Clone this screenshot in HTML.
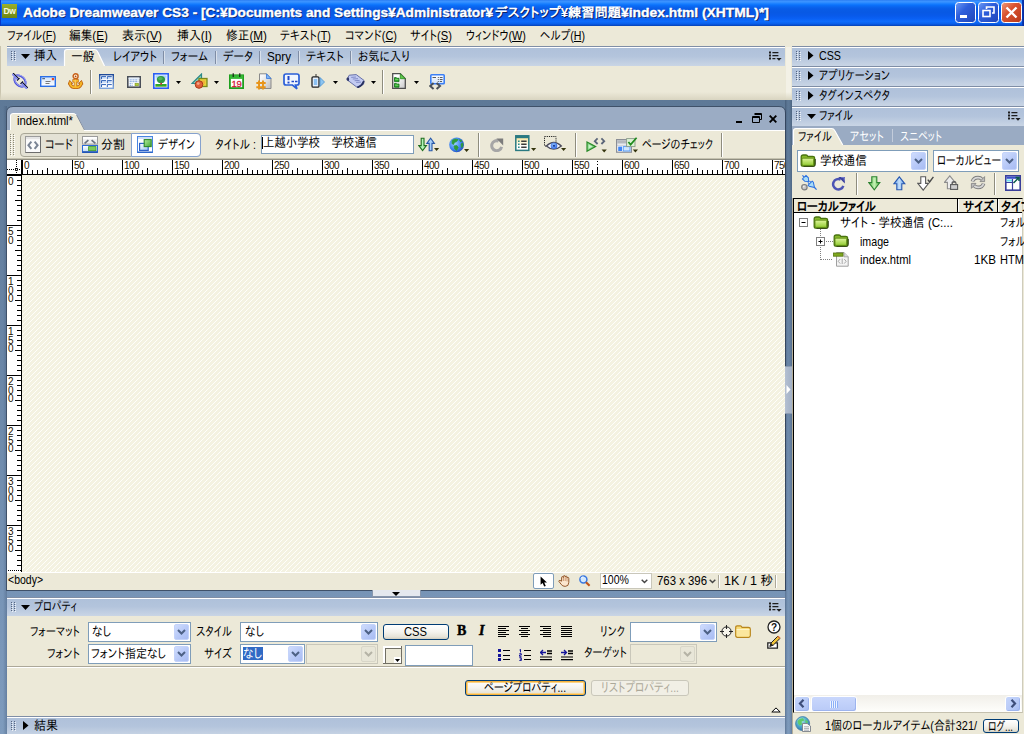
<!DOCTYPE html>
<html lang="ja"><head><meta charset="utf-8"><title>Adobe Dreamweaver CS3</title>
<style>
html,body{margin:0;padding:0}
body{width:1024px;height:734px;overflow:hidden;background:#ECE9D8;font-family:'Liberation Sans','IPAPGothic','IPAGothic',sans-serif;font-size:12px;position:relative}
#root{position:absolute;left:0;top:0;width:1024px;height:734px;overflow:hidden;background:#ECE9D8}
#root div,#root span.t,#root svg{position:absolute;box-sizing:border-box}
span.t{white-space:nowrap;transform-origin:0 0}
u{text-decoration:underline;text-underline-offset:1px}
.hd{background:linear-gradient(#AFC1DA,#B3C4DC 45%,#C9D5E5);border-top:1px solid #fff;box-shadow:0 -1px 0 #7F8EA6}
.sel{background:#fff;border:1px solid #7F9DB9}
.ddb{border:1px solid #C4D3FA;border-radius:2px;background:linear-gradient(135deg,#CFDCFD,#B5C7F7 60%,#A9BCF2)}
.btn{border:1px solid #003C74;border-radius:3px;background:linear-gradient(#fff,#F4F3EE 50%,#E6E3D8 85%,#D2CEC0)}
</style></head>
<body><div id="root">
<div style="left:0px;top:0px;width:1024px;height:26px;background:linear-gradient(#2A7CF2 0%,#3C93FF 5%,#2E8CFF 10%,#177EFF 15%,#0A70FA 20%,#0A64EE 27%,#085BE6 35%,#0859E4 48%,#085AEA 60%,#0A60F4 72%,#0E6CFC 82%,#0A62EE 90%,#0852D8 95%,#0642B0 100%)"></div>
<div style="left:0px;top:0px;width:1px;height:26px;background:#0838C8"></div>
<div style="left:1022px;top:0px;width:2px;height:26px;background:linear-gradient(90deg,#0A3CC0,#062A98)"></div>
<svg style="left:2px;top:4px" width="15" height="14" viewBox="0 0 15 14"><defs><linearGradient id="gdw1" x1="0" y1="0" x2="0" y2="1"><stop offset="0" stop-color="#9CB02A"/><stop offset="1" stop-color="#6C8612"/></linearGradient></defs><rect width="15" height="14" fill="url(#gdw1)"/><text x="7.5" y="10.2" font-size="8.5" font-weight="bold" fill="#F6F8E4" text-anchor="middle" font-family="Liberation Sans,sans-serif" letter-spacing="-0.3">Dw</text></svg>
<span class="t" style="left:23px;top:6px;font-size:13px;line-height:13px;color:#fff;font-weight:bold;transform:scaleX(1.053);text-shadow:1px 1px 0 #0A246A;-webkit-text-stroke:0.35px #fff;">Adobe Dreamweaver CS3 - [C:¥Documents and Settings¥Administrator¥</span>
<span class="t" style="left:495px;top:6px;font-size:13px;line-height:13px;color:#fff;font-weight:bold;transform:scaleX(1.016);text-shadow:1px 1px 0 #0A246A;">デスクトップ¥練習問題</span>
<span class="t" style="left:621px;top:6px;font-size:13px;line-height:13px;color:#fff;font-weight:bold;transform:scaleX(1.067);text-shadow:1px 1px 0 #0A246A;-webkit-text-stroke:0.35px #fff;">¥index.html (XHTML)*]</span>
<svg style="left:955px;top:2px" width="67" height="21" viewBox="0 0 67 21"><defs><linearGradient id="gr2" x1="0" y1="0" x2="1" y2="1"><stop offset="0" stop-color="#EE9A7B"/><stop offset="0.4" stop-color="#D9532F"/><stop offset="1" stop-color="#B8391A"/></linearGradient><linearGradient id="gb2" x1="0" y1="0" x2="1" y2="1"><stop offset="0" stop-color="#6E9BF5"/><stop offset="0.4" stop-color="#2E5FDC"/><stop offset="1" stop-color="#1F45B8"/></linearGradient></defs><rect x="0.5" y="0.5" width="20" height="20" rx="3" fill="url(#gb2)" stroke="#fff"/><rect x="23.5" y="0.5" width="20" height="20" rx="3" fill="url(#gb2)" stroke="#fff"/><rect x="46.5" y="0.5" width="20" height="20" rx="3" fill="url(#gr2)" stroke="#fff"/><rect x="5" y="13" width="7" height="3" fill="#fff"/><path d="M31.5 7V5H39V11H37" fill="none" stroke="#fff" stroke-width="1.6"/><rect x="28" y="8.5" width="7" height="6" fill="none" stroke="#fff" stroke-width="1.6"/><path d="M51.5 5.5L61.5 15.5M61.5 5.5L51.5 15.5" stroke="#fff" stroke-width="2.4"/></svg>
<span class="t" style="left:7px;top:29px;font-size:13px;line-height:13px;color:#000;transform:scaleX(0.829);">ファイル(<u>F</u>)</span>
<span class="t" style="left:69px;top:29px;font-size:13px;line-height:13px;color:#000;transform:scaleX(0.899);">編集(<u>E</u>)</span>
<span class="t" style="left:122px;top:29px;font-size:13px;line-height:13px;color:#000;transform:scaleX(0.923);">表示(<u>V</u>)</span>
<span class="t" style="left:177px;top:29px;font-size:13px;line-height:13px;color:#000;transform:scaleX(0.914);">挿入(<u>I</u>)</span>
<span class="t" style="left:226px;top:29px;font-size:13px;line-height:13px;color:#000;transform:scaleX(0.900);">修正(<u>M</u>)</span>
<span class="t" style="left:280px;top:29px;font-size:13px;line-height:13px;color:#000;transform:scaleX(0.836);">テキスト(<u>T</u>)</span>
<span class="t" style="left:345px;top:29px;font-size:13px;line-height:13px;color:#000;transform:scaleX(0.842);">コマンド(<u>C</u>)</span>
<span class="t" style="left:410px;top:29px;font-size:13px;line-height:13px;color:#000;transform:scaleX(0.858);">サイト(<u>S</u>)</span>
<span class="t" style="left:466px;top:29px;font-size:13px;line-height:13px;color:#000;transform:scaleX(0.837);">ウィンドウ(<u>W</u>)</span>
<span class="t" style="left:540px;top:29px;font-size:13px;line-height:13px;color:#000;transform:scaleX(0.814);">ヘルプ(<u>H</u>)</span>
<div style="left:0px;top:46px;width:1px;height:54px;background:#C9C4AE"></div>
<div class="hd" style="left:7px;top:47px;width:778px;height:19px;"></div>
<div style="left:11px;top:51px;width:5px;height:10px;background:repeating-linear-gradient(#56657F 0 1px,transparent 1px 2px) 0 0/1px 100% no-repeat,repeating-linear-gradient(#56657F 0 1px,transparent 1px 2px) 3px 0/1px 100% no-repeat,repeating-linear-gradient(rgba(255,255,255,.75) 0 1px,transparent 1px 2px) 1px 1px/1px 100% no-repeat,repeating-linear-gradient(rgba(255,255,255,.75) 0 1px,transparent 1px 2px) 4px 1px/1px 100% no-repeat"></div>
<svg style="left:21px;top:54px" width="9" height="5" viewBox="0 0 9 5"><path d="M0 0H9L4.5 5z" fill="#000"/></svg>
<span class="t" style="left:34px;top:49px;font-size:13px;line-height:13px;color:#000;transform:scaleX(0.885);">挿入</span>
<svg style="left:62px;top:48px" width="46" height="18" viewBox="0 0 46 18"><path d="M2 18V4Q2 1.5 5 1.5H32.5Q35 1.5 36 4L42.5 18z" fill="#ECE9D8"/><path d="M2.5 18V4Q2.5 1.5 5 1.5H32.5Q34.8 1.5 35.8 4L42.5 18" fill="none" stroke="#fff" stroke-width="1.2"/></svg>
<span class="t" style="left:71px;top:50px;font-size:13px;line-height:13px;color:#000;transform:scaleX(0.904);">一般</span>
<span class="t" style="left:113px;top:50px;font-size:13px;line-height:13px;color:#000;transform:scaleX(0.853);">レイアウト</span>
<span class="t" style="left:171px;top:50px;font-size:13px;line-height:13px;color:#000;transform:scaleX(0.847);">フォーム</span>
<span class="t" style="left:223px;top:50px;font-size:13px;line-height:13px;color:#000;transform:scaleX(0.851);">データ</span>
<span class="t" style="left:267px;top:50px;font-size:13px;line-height:13px;color:#000;transform:scaleX(0.898);">Spry</span>
<span class="t" style="left:306px;top:50px;font-size:13px;line-height:13px;color:#000;transform:scaleX(0.857);">テキスト</span>
<span class="t" style="left:358px;top:50px;font-size:13px;line-height:13px;color:#000;transform:scaleX(0.869);">お気に入り</span>
<div style="left:163px;top:51px;width:1px;height:13px;background:#7F8DA5"></div>
<div style="left:164px;top:51px;width:1px;height:13px;background:#D9E1EC"></div>
<div style="left:215px;top:51px;width:1px;height:13px;background:#7F8DA5"></div>
<div style="left:216px;top:51px;width:1px;height:13px;background:#D9E1EC"></div>
<div style="left:259px;top:51px;width:1px;height:13px;background:#7F8DA5"></div>
<div style="left:260px;top:51px;width:1px;height:13px;background:#D9E1EC"></div>
<div style="left:298px;top:51px;width:1px;height:13px;background:#7F8DA5"></div>
<div style="left:299px;top:51px;width:1px;height:13px;background:#D9E1EC"></div>
<div style="left:350px;top:51px;width:1px;height:13px;background:#7F8DA5"></div>
<div style="left:351px;top:51px;width:1px;height:13px;background:#D9E1EC"></div>
<svg style="left:769px;top:51px" width="13" height="10" viewBox="0 0 13 10"><path d="M0 0.5h2v2h-2zM0 3.5h2v2h-2zM0 6.5h2v2h-2z" fill="#1E1E1E"/><path d="M3.4 1.7H9.4M3.4 4.7H9.4M3.4 7.7H6.4" stroke="#1E1E1E" stroke-width="1.3" fill="none"/><path d="M7.4 7H12.6L10 9.8z" fill="#1E1E1E"/></svg>
<div style="left:786px;top:47px;width:5px;height:52px;background:#F3F1E6"></div>
<div style="left:0px;top:92px;width:792px;height:8px;background:linear-gradient(rgba(236,233,216,0),#D9D5C1)"></div>
<svg style="left:12px;top:73px" width="16" height="16" viewBox="0 0 16 16"><g transform="rotate(45 8 8)"><ellipse cx="8" cy="8" rx="6.6" ry="4.6" fill="none" stroke="#4A50D8" stroke-width="2"/><ellipse cx="8" cy="7.6" rx="6.6" ry="4.6" fill="none" stroke="#B8BCFA" stroke-width="0.7"/><path d="M-2.5 7.3H5.6M10.4 7.3H18.5" stroke="#101230" stroke-width="1.2"/><path d="M-2.5 8.7H5.6M10.4 8.7H18.5" stroke="#7F86F0" stroke-width="1.6"/><path d="M5.6 6.2V9.8M10.4 6.2V9.8" stroke="#101230" stroke-width="1"/></g></svg>
<svg style="left:40px;top:76px" width="16" height="11" viewBox="0 0 16 11"><defs><linearGradient id="gem3" x1="0" y1="0" x2="0" y2="1"><stop offset="0" stop-color="#CFE3FB"/><stop offset="1" stop-color="#FFFFFF"/></linearGradient></defs><rect x="0.7" y="0.7" width="14.6" height="9.6" fill="url(#gem3)" stroke="#2A6FE8" stroke-width="1.4"/><path d="M2.3 2.7H5" stroke="#2A3A5A" stroke-width="0.9"/><rect x="11.8" y="2" width="2.2" height="2.2" fill="#E8431F"/><path d="M5.5 5.5H10.5M5.5 7.5H9.5" stroke="#6A6A6A" stroke-width="0.9"/></svg>
<svg style="left:68px;top:73px" width="16" height="16" viewBox="0 0 16 16"><g fill="none" stroke-linecap="butt"><path d="M7.6 5.8V14.8M4.4 7.9H10.8M1.9 9.6Q2.2 14.4 7.6 14.4Q13 14.4 13.3 9.6" stroke="#BE6410" stroke-width="3.4"/><path d="M0.3 11.2L1.7 7.4L4.6 10.6zM14.9 11.2L13.5 7.4L10.6 10.6z" fill="#F5B324" stroke="#BE6410" stroke-width="0.9"/><path d="M7.6 5.8V14.6M4.8 7.9H10.4M1.9 9.8Q2.2 14.4 7.6 14.4Q13 14.4 13.3 9.8" stroke="#F7B828" stroke-width="1.9"/><path d="M7.1 6.4V13.6" stroke="#FFE394" stroke-width="0.7"/></g><circle cx="7.6" cy="3.3" r="2.5" fill="#FFF3DC" stroke="#C8601A" stroke-width="1.4"/><circle cx="7.6" cy="3.3" r="0.9" fill="#B24A12"/></svg>
<div style="left:90px;top:70px;width:1px;height:24px;background:#8E8C7E"></div>
<div style="left:91px;top:70px;width:1px;height:24px;background:#fff"></div>
<svg style="left:99px;top:74px" width="15" height="15" viewBox="0 0 15 15"><defs><linearGradient id="gtb4" x1="0" y1="0" x2="0" y2="1"><stop offset="0" stop-color="#1F4A98"/><stop offset="1" stop-color="#7FA5DC"/></linearGradient></defs><rect x="0.7" y="0.7" width="13.6" height="13.6" fill="#fff" stroke="url(#gtb4)" stroke-width="1.4"/><g fill="#CFE0F8"><rect x="2.5" y="2.6" width="4.4" height="2.6"/><rect x="8.3" y="2.6" width="4.4" height="2.6"/><rect x="2.5" y="6.6" width="4.4" height="2.6"/><rect x="8.3" y="6.6" width="4.4" height="2.6"/></g><g stroke="#2F62B8" stroke-width="1" fill="none"><path d="M2.5 5.2V2.6H7M8.3 5.2V2.6H12.8M2.5 9.2V6.6H7M8.3 9.2V6.6H12.8M2.5 13V10.6H7M8.3 13V10.6H12.8"/></g></svg>
<svg style="left:127px;top:76px" width="14" height="12" viewBox="0 0 14 12"><rect x="0.8" y="0.8" width="12.4" height="10.4" fill="#fff" stroke="#4A4F58" stroke-width="1.6"/><rect x="1.6" y="1.6" width="10.8" height="1.4" fill="#E4EEFA"/><path d="M2.6 3.9H11.4M2.6 5.7H11.4" stroke="#5A8AD0" stroke-width="0.8" stroke-dasharray="2.2 0.6"/><path d="M2.6 7.7H5.6M2.6 9.4H5.6" stroke="#5A8AD0" stroke-width="0.8" stroke-dasharray="1.4 0.6"/><rect x="8" y="7.2" width="3.6" height="2.6" fill="#B4CC3A" stroke="#6E8A1E" stroke-width="0.5"/></svg>
<svg style="left:153px;top:73px" width="16" height="16" viewBox="0 0 16 16"><defs><linearGradient id="gim5" x1="0" y1="0" x2="0" y2="1"><stop offset="0" stop-color="#9CCBF8"/><stop offset="0.8" stop-color="#FFFFFF"/></linearGradient></defs><rect x="0.8" y="0.8" width="14.4" height="14.4" fill="#fff" stroke="#2A5FF5" stroke-width="1.6"/><rect x="2.4" y="2.4" width="11.2" height="9" fill="url(#gim5)"/><rect x="2.4" y="11" width="11.2" height="2.7" fill="#2FA82A"/><path d="M2.4 13.4H13.6" stroke="#B8C83A" stroke-width="0.6" stroke-dasharray="1 1"/><ellipse cx="8" cy="6.6" rx="4.1" ry="3.7" fill="#2F9A45"/><ellipse cx="7.4" cy="5.6" rx="2.2" ry="1.7" fill="#52B85A"/><rect x="7.3" y="9.8" width="1.7" height="2" fill="#C03A3A"/></svg>
<svg style="left:176px;top:81px" width="5" height="3" viewBox="0 0 5 3"><path d="M0 0H5L2.5 3z" fill="#000"/></svg>
<svg style="left:191px;top:73px" width="17" height="17" viewBox="0 0 17 17"><path d="M1 10.5L10.5 1V10.5z" fill="#8FD3C0" stroke="#2B8A8A" stroke-width="1.2"/><rect x="8" y="5.5" width="8" height="8" fill="#E6D23C" stroke="#7A8A1E" stroke-width="1.3"/><rect x="10.5" y="7.5" width="3.5" height="3.5" fill="#F3B13A"/><circle cx="8" cy="11.5" r="3.8" fill="#E0603A" stroke="#A83A1A" stroke-width="1"/><circle cx="7.2" cy="10.6" r="1.4" fill="#F5A58A"/></svg>
<svg style="left:214px;top:81px" width="5" height="3" viewBox="0 0 5 3"><path d="M0 0H5L2.5 3z" fill="#000"/></svg>
<svg style="left:229px;top:73px" width="15" height="16" viewBox="0 0 15 16"><rect x="0.9" y="2.3" width="13.2" height="12.8" fill="#fff" stroke="#1FA01F" stroke-width="1.8"/><rect x="1" y="2.3" width="13" height="3.6" fill="#35B835"/><path d="M4.2 0.3V4M10.8 0.3V4" stroke="#111" stroke-width="1.1"/><text x="7.6" y="13.6" font-size="9.5" fill="#D41A3A" text-anchor="middle" font-family="Liberation Sans,sans-serif" letter-spacing="-0.3" stroke="#D41A3A" stroke-width="0.3">19</text></svg>
<svg style="left:256px;top:73px" width="16" height="17" viewBox="0 0 16 17"><defs><linearGradient id="gss6" x1="0" y1="0" x2="1" y2="1"><stop offset="0.2" stop-color="#F8F8F8"/><stop offset="1" stop-color="#BEBEBE"/></linearGradient></defs><path d="M3.5 0.8H10.5L15 5.5V15.5H3.5z" fill="url(#gss6)" stroke="#8A8A8A" stroke-width="1"/><path d="M10.5 0.8V5.5H15z" fill="#7FB5F8" stroke="#3A78D8" stroke-width="0.8"/><path d="M3 7.6V16.6M7 7.6V16.6M0.3 10H9.7M0.3 14.2H9.7" stroke="#E8951A" stroke-width="1.9" fill="none"/></svg>
<svg style="left:283px;top:73px" width="17" height="17" viewBox="0 0 17 17"><path d="M3 1H14Q16 1 16 3V10Q16 12 14 12H12.5L14 15.8L9.5 12H3Q1 12 1 10V3Q1 1 3 1z" fill="#F1F6FE" stroke="#2A5FD8" stroke-width="1.7"/><path d="M5.5 3V7.2" stroke="#1F47C8" stroke-width="2"/><rect x="4.5" y="8.6" width="2" height="1.9" fill="#1F47C8"/><path d="M8.5 8.5H11M12 8.5H14.5" stroke="#1F47C8" stroke-width="1.4"/></svg>
<svg style="left:311px;top:74px" width="14" height="14" viewBox="0 0 14 14"><path d="M5 0V3" stroke="#333" stroke-width="1"/><rect x="1" y="2.8" width="7" height="10.4" rx="1.2" fill="#E8F0FB" stroke="#222" stroke-width="1.3"/><rect x="2.8" y="5" width="3.4" height="6" fill="#8CC1F2"/><path d="M9 3.5L13.5 8L9 12.5z" fill="#8EC5F0" stroke="#4A90D0" stroke-width="0.8"/></svg>
<svg style="left:333px;top:81px" width="5" height="3" viewBox="0 0 5 3"><path d="M0 0H5L2.5 3z" fill="#000"/></svg>
<svg style="left:346px;top:74px" width="19" height="14" viewBox="0 0 19 14"><path d="M3.2 1.2L10.2 0.6L18 6.4L17.6 10.2L11.2 13.4L0.8 5.6z" fill="#C3CBF2" stroke="#5A64A0" stroke-width="0.9"/><path d="M0.6 4.2Q0.2 6.6 2.6 7.2Q3.6 5.6 2.8 3.6Q1.2 3 0.6 4.2z" fill="#2F3768"/><path d="M11.2 13.4Q15.5 12.6 17.9 7.2" fill="none" stroke="#27305F" stroke-width="1.9"/><path d="M5.2 3.4L10 3M6.8 5L12 4.7M8.6 6.7L13.6 6.4M10.2 8.4L15 8.1" stroke="#7A84C2" stroke-width="0.9"/></svg>
<svg style="left:371px;top:81px" width="5" height="3" viewBox="0 0 5 3"><path d="M0 0H5L2.5 3z" fill="#000"/></svg>
<div style="left:382px;top:70px;width:1px;height:24px;background:#8E8C7E"></div>
<div style="left:383px;top:70px;width:1px;height:24px;background:#fff"></div>
<svg style="left:392px;top:73px" width="14" height="16" viewBox="0 0 14 16"><defs><linearGradient id="gtp7" x1="0" y1="0" x2="1" y2="1"><stop offset="0.3" stop-color="#FFFFFF"/><stop offset="1" stop-color="#C8C8C8"/></linearGradient></defs><path d="M0.7 0.7H8.3L13.3 5.7V15.3H0.7z" fill="url(#gtp7)" stroke="#4F4F4F" stroke-width="1.3"/><path d="M8.3 0.7V5.7H13.3z" fill="#5FCB4A" stroke="#2A8A1E" stroke-width="0.8"/><g fill="#2DAA2D" stroke="#0F6A14" stroke-width="0.8"><path d="M2.5 4.6H4.3L4.9 5.3H7V8.6H2.5z"/><path d="M2.5 10.4H4.3L4.9 11.1H7V14.2H2.5z"/></g><path d="M3.2 6.4H6.4M3.2 12.2H6.4" stroke="#8FE07A" stroke-width="0.8"/></svg>
<svg style="left:414px;top:81px" width="5" height="3" viewBox="0 0 5 3"><path d="M0 0H5L2.5 3z" fill="#000"/></svg>
<svg style="left:429px;top:74px" width="16" height="16" viewBox="0 0 16 16"><defs><linearGradient id="gtc8" x1="0" y1="0" x2="0" y2="1"><stop offset="0" stop-color="#FFFFFF"/><stop offset="1" stop-color="#CFE2FB"/></linearGradient></defs><rect x="1.8" y="0.8" width="13.4" height="9" rx="0.8" fill="url(#gtc8)" stroke="#3A7FF5" stroke-width="1.6"/><path d="M3.5 3.5H7M8.8 3.5H9.8M10.8 3.5H13.6M8.8 5.5H9.8M10.8 5.5H13.6M8.8 7.5H9.8M10.8 7.5H13" stroke="#4A4A4A" stroke-width="0.9"/><path d="M4.6 9L1.2 12L4.6 15M7.6 9L11 12L7.6 15" fill="none" stroke="#4A5058" stroke-width="2"/></svg>
<div style="left:0px;top:100px;width:792px;height:634px;background:linear-gradient(#5E7997,#6A86A7 40%,#7895B7 80%,#7E9BBD)"></div>
<div style="left:3px;top:106px;width:4px;height:628px;background:linear-gradient(90deg,rgba(40,60,90,0),rgba(40,60,90,0.28))"></div>
<svg style="left:6px;top:106px" width="780" height="30" viewBox="0 0 780 30"><path d="M0.5 30V7Q0.5 0.5 7 0.5H773Q779.5 0.5 779.5 7V30" fill="#9BACC4" stroke="#3F5169" stroke-width="1"/></svg>
<div style="left:6px;top:130px;width:780px;height:461px;background:#ECE9D8;border-left:1px solid #3F5169;border-right:1px solid #3F5169;border-bottom:1px solid #3F5169"></div>
<svg style="left:9px;top:112px" width="80" height="18" viewBox="0 0 80 18"><path d="M1 18V4Q1 1.5 4 1.5H64Q67 1.5 68 3.5L76 18z" fill="#ECE9D8"/><path d="M1.5 18V4Q1.5 1.5 4 1.5H64Q66.6 1.5 67.6 3.5" fill="none" stroke="#fff"/><path d="M67.6 3L75.5 18" stroke="#7F8CA3" fill="none"/></svg>
<span class="t" style="left:17px;top:114px;font-size:13px;line-height:13px;color:#000;transform:scaleX(0.871);">index.html*</span>
<div style="left:84px;top:130px;width:701px;height:1px;background:#fff"></div>
<div style="left:736px;top:121px;width:6px;height:2px;background:#000"></div>
<svg style="left:752px;top:113px" width="10" height="10" viewBox="0 0 10 10"><path d="M2.5 0.5H9.5V6.5H8M2.5 1.5H9.5" stroke="#000" fill="none"/><path d="M0.5 3.5H7.5V9.5H0.5zM0.5 4.5H7.5" stroke="#000" fill="none"/></svg>
<svg style="left:769px;top:115px" width="8" height="8" viewBox="0 0 8 8"><path d="M0.7 0.7L7.3 7.3M7.3 0.7L0.7 7.3" stroke="#000" stroke-width="1.9"/></svg>
<div style="left:7px;top:158px;width:778px;height:1px;background:#C5C2B0"></div>
<div style="left:7px;top:159px;width:778px;height:1px;background:#8F8D80"></div>
<div style="left:10px;top:134px;width:5px;height:22px;background:repeating-linear-gradient(#8A887A 0 1px,transparent 1px 2px) 0 0/1px 100% no-repeat,repeating-linear-gradient(#8A887A 0 1px,transparent 1px 2px) 3px 0/1px 100% no-repeat,repeating-linear-gradient(#fff 0 1px,transparent 1px 2px) 1px 1px/1px 100% no-repeat,repeating-linear-gradient(#fff 0 1px,transparent 1px 2px) 4px 1px/1px 100% no-repeat"></div>
<div style="left:20px;top:133px;width:181px;height:24px;background:#E4E2D5;border:1px solid #A8A696;border-radius:4px"></div>
<div style="left:131px;top:133px;width:70px;height:24px;background:#fff;border:1px solid #86A2CE;border-radius:0 4px 4px 0"></div>
<div style="left:77px;top:134px;width:1px;height:22px;background:#A8A696"></div>
<svg style="left:25px;top:136px" width="16" height="17" viewBox="0 0 16 17"><rect x="0.5" y="0.5" width="15" height="16" fill="#FBFBFB" stroke="#9C9C9C"/><rect x="1" y="1" width="14" height="2.2" fill="#E4E4E4"/><path d="M0.5 16.5H15.5V0.5" fill="none" stroke="#6C6C6C"/><path d="M6.4 5.6L3.4 9.2L6.4 12.8M9.6 5.6L12.6 9.2L9.6 12.8" fill="none" stroke="#7A8494" stroke-width="2"/></svg>
<span class="t" style="left:45px;top:138px;font-size:13px;line-height:13px;color:#000;transform:scaleX(0.848);">コード</span>
<svg style="left:82px;top:136px" width="16" height="17" viewBox="0 0 16 17"><defs><linearGradient id="gsp9" x1="0" y1="0" x2="0" y2="1"><stop offset="0" stop-color="#FFFFFF"/><stop offset="1" stop-color="#B8D8FA"/></linearGradient></defs><rect x="0.5" y="0.5" width="15" height="7.6" fill="#F0F0F0" stroke="#9C9C9C"/><rect x="1" y="1" width="14" height="1.8" fill="#fff"/><path d="M2.6 7.4L6.4 4.2M13.4 7.4L9.6 4.2" fill="none" stroke="#6A7280" stroke-width="1.7"/><rect x="0.5" y="9.5" width="15" height="7" fill="url(#gsp9)" stroke="#2D6BD8"/><path d="M0.5 16H15.5" stroke="#1F50B0" stroke-width="1.6"/><rect x="6.6" y="10.6" width="7.4" height="4" fill="#7DCB5A" stroke="#3F9A2A" stroke-width="0.8"/></svg>
<span class="t" style="left:101px;top:138px;font-size:13px;line-height:13px;color:#000;transform:scaleX(0.923);">分割</span>
<svg style="left:137px;top:136px" width="16" height="17" viewBox="0 0 16 17"><defs><linearGradient id="gds110" x1="0" y1="0" x2="1" y2="1"><stop offset="0" stop-color="#FFFFFF"/><stop offset="1" stop-color="#9CC6F8"/></linearGradient><linearGradient id="gds210" x1="0" y1="0" x2="1" y2="1"><stop offset="0" stop-color="#B4ECA0"/><stop offset="1" stop-color="#44A838"/></linearGradient></defs><rect x="0.5" y="0.5" width="15" height="16" fill="#fff" stroke="#4A86E0"/><rect x="1" y="1" width="14" height="2" fill="#CFE0F8"/><path d="M0.5 16.2H15.5" stroke="#2A62C8" stroke-width="1.4"/><rect x="2.6" y="7.4" width="8.6" height="7" fill="url(#gds110)" stroke="#2D62C8" stroke-width="1.2"/><rect x="7.2" y="3.6" width="7" height="7" fill="url(#gds210)" stroke="#2E8A2A" stroke-width="1.1"/></svg>
<span class="t" style="left:158px;top:138px;font-size:13px;line-height:13px;color:#000;transform:scaleX(0.804);">デザイン</span>
<span class="t" style="left:215px;top:138px;font-size:13px;line-height:13px;color:#000;transform:scaleX(0.822);">タイトル :</span>
<div style="left:261px;top:135px;width:153px;height:19px;background:#fff;border:1px solid #7F9DB9"></div>
<span class="t" style="left:263px;top:136px;font-size:13px;line-height:13px;color:#000;transform:scaleX(0.877);">上越小学校　学校通信</span>
<div style="left:262px;top:137px;width:1px;height:12px;background:#000"></div>
<svg style="left:418px;top:137px" width="22" height="15" viewBox="0 0 22 15"><path d="M3.2 1.2H6V8.6H8.4L4.6 13.6L0.8 8.6H3.2z" fill="#B2F2B8" stroke="#1E6E1E" stroke-width="1.1"/><path d="M11.2 13.8H14V6.4H16.4L12.6 1.2L8.8 6.4H11.2z" fill="#A8D0F8" stroke="#2858A8" stroke-width="1.1"/><path d="M16 11H21.2L18.6 14z" fill="#33330C"/></svg>
<svg style="left:449px;top:137px" width="21" height="16" viewBox="0 0 21 16"><defs><radialGradient id="gg11" cx="0.38" cy="0.4" r="0.75"><stop offset="0" stop-color="#9CD0FF"/><stop offset="0.55" stop-color="#3F84F0"/><stop offset="1" stop-color="#1A3CA8"/></radialGradient></defs><circle cx="7.6" cy="7.8" r="7.4" fill="url(#gg11)"/><path d="M3.2 3.4L6 2L9 2.6L7.6 4.6L5.4 5.4L4.6 7.4L3 6.6zM10.4 2.8L12.6 3.4L12 5zM5 9L7.8 8.6L9.2 10.4L7.6 13.4L5.8 12zM12 7L13.6 6L14 9L12.6 10.6z" fill="#2E9A3A" stroke="#2E9A3A" stroke-width="0.8" stroke-linejoin="round"/><path d="M15 12H20.2L17.6 15z" fill="#33330C"/></svg>
<div style="left:478px;top:133px;width:1px;height:24px;background:#8E8C7E"></div>
<div style="left:479px;top:133px;width:1px;height:24px;background:#fff"></div>
<svg style="left:490px;top:138px" width="14" height="14" viewBox="0 0 14 14"><path d="M11.6 8.8A5 5 0 1 1 8.6 3" fill="none" stroke="#A6A6A6" stroke-width="3"/><path d="M6.4 0.6H13.2V7.4z" fill="#7C7C7C"/></svg>
<svg style="left:515px;top:135px" width="22" height="17" viewBox="0 0 22 17"><defs><linearGradient id="gvo12" x1="0" y1="0" x2="0" y2="1"><stop offset="0" stop-color="#F6E08A"/><stop offset="0.7" stop-color="#FFFFFF"/></linearGradient></defs><rect x="0.8" y="0.8" width="13" height="14.6" fill="url(#gvo12)" stroke="#2A7A82" stroke-width="1.5"/><rect x="0.8" y="0.8" width="13" height="2.4" fill="#2A7A82"/><path d="M3 6.2H4.6M3 9.2H4.6M3 12.2H4.6" stroke="#2A8A8A" stroke-width="1.6"/><path d="M6.2 6.2H11.6M6.2 9.2H11.6M6.2 12.2H11.6" stroke="#3A3A3A" stroke-width="1.4"/><path d="M16 13H21.2L18.6 16z" fill="#33330C"/></svg>
<svg style="left:544px;top:135px" width="23" height="17" viewBox="0 0 23 17"><defs><radialGradient id="gey13" cx="0.45" cy="0.4" r="0.6"><stop offset="0" stop-color="#9CCBFF"/><stop offset="1" stop-color="#2A62E0"/></radialGradient></defs><rect x="0.5" y="1.5" width="11.5" height="9.5" fill="none" stroke="#222" stroke-dasharray="1.2 1"/><path d="M2.4 11Q9.6 4 17.4 11Q9.6 17.4 2.4 11z" fill="#F2F4FF" stroke="#4A4A5A" stroke-width="1.2"/><circle cx="10" cy="10.8" r="3.3" fill="url(#gey13)"/><circle cx="10" cy="10.8" r="1.1" fill="#1A3A9A"/><path d="M17 13H22.2L19.6 16z" fill="#33330C"/></svg>
<div style="left:575px;top:133px;width:1px;height:24px;background:#8E8C7E"></div>
<div style="left:576px;top:133px;width:1px;height:24px;background:#fff"></div>
<svg style="left:586px;top:137px" width="22" height="16" viewBox="0 0 22 16"><path d="M1 5L9.6 9.6L1 14.2z" fill="#8AD88A" stroke="#2A8A2A" stroke-width="1.2"/><path d="M2.6 7.6L6.4 9.6L2.6 11.8z" fill="#C8F2C8"/><path d="M11.6 1.4L8.8 4.2L11.6 7M15.4 1.4L18.2 4.2L15.4 7" fill="none" stroke="#5A6478" stroke-width="1.8"/><path d="M15.6 12.4H20.8L18.2 15.4z" fill="#33330C"/></svg>
<svg style="left:616px;top:137px" width="23" height="16" viewBox="0 0 23 16"><rect x="0.6" y="2.6" width="14.8" height="12.6" fill="#FAFBFD" stroke="#8A8E96" stroke-width="1.2"/><rect x="1.2" y="3.2" width="13.6" height="3.4" fill="#B4B8BE"/><path d="M1 8.2H15" stroke="#C0C4CA"/><rect x="2.2" y="9.6" width="3.8" height="4.4" fill="#3F86F5"/><rect x="7.2" y="9.6" width="6.8" height="4.4" fill="#CFE6FD" stroke="#4F97F5" stroke-width="0.9"/><rect x="10.6" y="1.6" width="8.4" height="8" fill="#DCF2D4" stroke="#8A9A8A" stroke-width="0.9"/><path d="M12.4 5L14.6 7.6L20.6 0.8" fill="none" stroke="#1E8A1E" stroke-width="1.7"/><path d="M16.8 12.4H22L19.4 15.4z" fill="#33330C"/></svg>
<span class="t" style="left:642px;top:138px;font-size:13px;line-height:13px;color:#000;transform:scaleX(0.783);">ページのチェック</span>
<div style="left:721px;top:133px;width:1px;height:24px;background:#8E8C7E"></div>
<div style="left:722px;top:133px;width:1px;height:24px;background:#fff"></div>
<div style="left:7px;top:160px;width:778px;height:14px;background:#fff"></div>
<div style="left:7px;top:174px;width:778px;height:1px;background:#000"></div>
<div style="left:7px;top:175px;width:14px;height:397px;background:#fff"></div>
<div style="left:21px;top:160px;width:1px;height:412px;background:#000"></div>
<svg style="left:7px;top:160px" width="14" height="14" viewBox="0 0 14 14"><path d="M0 9.5H14M9.5 0V14" stroke="#000" stroke-dasharray="1 1" fill="none"/><rect x="8.5" y="8.5" width="2" height="2" fill="#fff" stroke="#000" stroke-width="0.8"/></svg>
<div style="left:22px;top:170px;width:763px;height:4px;background:repeating-linear-gradient(90deg,#000 0 1px,transparent 1px 5px)"></div>
<div style="left:47px;top:168px;width:738px;height:6px;background:repeating-linear-gradient(90deg,#000 0 1px,transparent 1px 50px)"></div>
<div style="left:22px;top:160px;width:763px;height:14px;background:repeating-linear-gradient(90deg,#000 0 1px,transparent 1px 50px)"></div>
<span class="t" style="left:24px;top:161px;font-size:10px;line-height:10px;color:#000;letter-spacing:-0.6px;color:#1a1200;">0</span>
<span class="t" style="left:74px;top:161px;font-size:10px;line-height:10px;color:#000;letter-spacing:-0.6px;color:#1a1200;">50</span>
<span class="t" style="left:124px;top:161px;font-size:10px;line-height:10px;color:#000;letter-spacing:-0.6px;color:#1a1200;">100</span>
<span class="t" style="left:174px;top:161px;font-size:10px;line-height:10px;color:#000;letter-spacing:-0.6px;color:#1a1200;">150</span>
<span class="t" style="left:224px;top:161px;font-size:10px;line-height:10px;color:#000;letter-spacing:-0.6px;color:#1a1200;">200</span>
<span class="t" style="left:274px;top:161px;font-size:10px;line-height:10px;color:#000;letter-spacing:-0.6px;color:#1a1200;">250</span>
<span class="t" style="left:324px;top:161px;font-size:10px;line-height:10px;color:#000;letter-spacing:-0.6px;color:#1a1200;">300</span>
<span class="t" style="left:374px;top:161px;font-size:10px;line-height:10px;color:#000;letter-spacing:-0.6px;color:#1a1200;">350</span>
<span class="t" style="left:424px;top:161px;font-size:10px;line-height:10px;color:#000;letter-spacing:-0.6px;color:#1a1200;">400</span>
<span class="t" style="left:474px;top:161px;font-size:10px;line-height:10px;color:#000;letter-spacing:-0.6px;color:#1a1200;">450</span>
<span class="t" style="left:524px;top:161px;font-size:10px;line-height:10px;color:#000;letter-spacing:-0.6px;color:#1a1200;">500</span>
<span class="t" style="left:574px;top:161px;font-size:10px;line-height:10px;color:#000;letter-spacing:-0.6px;color:#1a1200;">550</span>
<span class="t" style="left:624px;top:161px;font-size:10px;line-height:10px;color:#000;letter-spacing:-0.6px;color:#1a1200;">600</span>
<span class="t" style="left:674px;top:161px;font-size:10px;line-height:10px;color:#000;letter-spacing:-0.6px;color:#1a1200;">650</span>
<span class="t" style="left:724px;top:161px;font-size:10px;line-height:10px;color:#000;letter-spacing:-0.6px;color:#1a1200;">700</span>
<div style="left:774px;top:161px;width:11px;height:12px;overflow:hidden"><span class="t" style="left:0;top:0;font-size:10px;line-height:10px;color:#000;letter-spacing:-0.6px;color:#1a1200;">750</span></div>
<div style="left:17px;top:175px;width:4px;height:397px;background:repeating-linear-gradient(#000 0 1px,transparent 1px 5px)"></div>
<div style="left:15px;top:200px;width:6px;height:372px;background:repeating-linear-gradient(#000 0 1px,transparent 1px 50px)"></div>
<div style="left:7px;top:175px;width:14px;height:397px;background:repeating-linear-gradient(#000 0 1px,transparent 1px 50px)"></div>
<span class="t" style="left:8px;top:177px;font-size:10px;line-height:10px;color:#000;color:#1a1200;">0</span>
<span class="t" style="left:8px;top:227px;font-size:10px;line-height:10px;color:#000;color:#1a1200;">5</span>
<span class="t" style="left:8px;top:236px;font-size:10px;line-height:10px;color:#000;color:#1a1200;">0</span>
<span class="t" style="left:8px;top:277px;font-size:10px;line-height:10px;color:#000;color:#1a1200;">1</span>
<span class="t" style="left:8px;top:286px;font-size:10px;line-height:10px;color:#000;color:#1a1200;">0</span>
<span class="t" style="left:8px;top:294px;font-size:10px;line-height:10px;color:#000;color:#1a1200;">0</span>
<span class="t" style="left:8px;top:327px;font-size:10px;line-height:10px;color:#000;color:#1a1200;">1</span>
<span class="t" style="left:8px;top:336px;font-size:10px;line-height:10px;color:#000;color:#1a1200;">5</span>
<span class="t" style="left:8px;top:344px;font-size:10px;line-height:10px;color:#000;color:#1a1200;">0</span>
<span class="t" style="left:8px;top:377px;font-size:10px;line-height:10px;color:#000;color:#1a1200;">2</span>
<span class="t" style="left:8px;top:386px;font-size:10px;line-height:10px;color:#000;color:#1a1200;">0</span>
<span class="t" style="left:8px;top:394px;font-size:10px;line-height:10px;color:#000;color:#1a1200;">0</span>
<span class="t" style="left:8px;top:427px;font-size:10px;line-height:10px;color:#000;color:#1a1200;">2</span>
<span class="t" style="left:8px;top:436px;font-size:10px;line-height:10px;color:#000;color:#1a1200;">5</span>
<span class="t" style="left:8px;top:444px;font-size:10px;line-height:10px;color:#000;color:#1a1200;">0</span>
<span class="t" style="left:8px;top:477px;font-size:10px;line-height:10px;color:#000;color:#1a1200;">3</span>
<span class="t" style="left:8px;top:486px;font-size:10px;line-height:10px;color:#000;color:#1a1200;">0</span>
<span class="t" style="left:8px;top:494px;font-size:10px;line-height:10px;color:#000;color:#1a1200;">0</span>
<span class="t" style="left:8px;top:527px;font-size:10px;line-height:10px;color:#000;color:#1a1200;">3</span>
<span class="t" style="left:8px;top:536px;font-size:10px;line-height:10px;color:#000;color:#1a1200;">5</span>
<span class="t" style="left:8px;top:544px;font-size:10px;line-height:10px;color:#000;color:#1a1200;">0</span>
<div style="left:597px;top:161px;width:1px;height:12px;background:repeating-linear-gradient(#000 0 1px,transparent 1px 3px)"></div>
<svg style="left:22px;top:175px" width="763" height="397" viewBox="0 0 763 397" shape-rendering="crispEdges"><defs><pattern id="hatch14" width="5" height="5" patternUnits="userSpaceOnUse"><rect width="5" height="5" fill="#F4F2E1"/><path d="M4 0h1v1h-1zM3 1h1v1h-1zM2 2h1v1h-1zM1 3h1v1h-1zM0 4h1v1h-1z" fill="#FEFEFB"/></pattern></defs><rect width="763" height="397" fill="url(#hatch14)"/></svg>
<div style="left:7px;top:572px;width:778px;height:1px;background:#fff"></div>
<span class="t" style="left:8px;top:573px;font-size:13px;line-height:13px;color:#000;transform:scaleX(0.807);">&lt;body&gt;</span>
<div style="left:8px;top:570px;width:13px;height:1px;background:repeating-linear-gradient(90deg,#000 0 1px,#fff 1px 2px)"></div>
<div style="left:533px;top:573px;width:21px;height:16px;background:#fff;border:1px solid #7F9DB9;border-radius:2px"></div>
<svg style="left:540px;top:576px" width="8" height="11" viewBox="0 0 8 11"><path d="M0.6 0.4V8.8L2.6 7L4.2 10.6L5.8 9.9L4.2 6.4H7z" fill="#000"/></svg>
<svg style="left:558px;top:575px" width="14" height="12" viewBox="0 0 14 12"><path d="M3.6 6.2V2.6Q3.6 1.6 4.5 1.6Q5.4 1.6 5.4 2.6V1.5Q5.4 0.6 6.3 0.6Q7.2 0.6 7.2 1.5V2Q7.2 1.1 8.1 1.1Q9 1.1 9 2V3.2Q9 2.4 9.9 2.4Q10.8 2.4 10.8 3.4V7.4Q10.8 11.4 7.2 11.4Q4.6 11.4 3.2 9.4L0.9 6.4Q0.8 5.2 2 5.4z" fill="#FBE6CE" stroke="#8A4A1A" stroke-width="0.9"/><path d="M5.4 2.8V6M7.2 2.2V6M9 3.4V6.4" stroke="#B87A4A" stroke-width="0.7"/></svg>
<svg style="left:579px;top:575px" width="12" height="12" viewBox="0 0 12 12"><circle cx="4.4" cy="4.4" r="3.5" fill="#D4E8FC" stroke="#3A78E0" stroke-width="1.5"/><path d="M1.8 3.4Q2.6 1.8 4.4 1.8" fill="none" stroke="#fff" stroke-width="0.9"/><path d="M7 7.2L10.6 10.8" stroke="#C2551A" stroke-width="2.1"/></svg>
<div style="left:600px;top:573px;width:52px;height:16px;background:#fff;border:1px solid #C9C7BA"></div>
<span class="t" style="left:602px;top:573px;font-size:13px;line-height:13px;color:#000;transform:scaleX(0.812);">100%</span>
<svg style="left:641px;top:579px" width="7" height="5" viewBox="0 0 7 5"><path d="M0.7 0.7L3.5 3.6L6.3 0.7" fill="none" stroke="#444" stroke-width="1.4"/></svg>
<span class="t" style="left:657px;top:574px;font-size:13px;line-height:13px;color:#000;transform:scaleX(0.876);">763 x 396</span>
<svg style="left:709px;top:579px" width="7" height="5" viewBox="0 0 7 5"><path d="M0.7 0.7L3.5 3.6L6.3 0.7" fill="none" stroke="#444" stroke-width="1.4"/></svg>
<div style="left:718px;top:575px;width:1px;height:13px;background:#ACA899"></div>
<div style="left:719px;top:575px;width:1px;height:13px;background:#fff"></div>
<span class="t" style="left:724px;top:574px;font-size:13px;line-height:13px;color:#000;transform:scaleX(0.969);">1K / 1 秒</span>
<div style="left:775px;top:575px;width:1px;height:13px;background:#ACA899"></div>
<div style="left:776px;top:575px;width:1px;height:13px;background:#fff"></div>
<div style="left:372px;top:590px;width:49px;height:7px;background:#E4E8EE;border:1px solid #8796AC;border-top:none"></div>
<svg style="left:392px;top:592px" width="8" height="4" viewBox="0 0 8 4"><path d="M0 0H8L4.0 4z" fill="#000"/></svg>
<div style="left:7px;top:598px;width:778px;height:118px;background:#ECE9D8"></div>
<div class="hd" style="left:7px;top:598px;width:778px;height:18px;"></div>
<div style="left:11px;top:602px;width:5px;height:10px;background:repeating-linear-gradient(#56657F 0 1px,transparent 1px 2px) 0 0/1px 100% no-repeat,repeating-linear-gradient(#56657F 0 1px,transparent 1px 2px) 3px 0/1px 100% no-repeat,repeating-linear-gradient(rgba(255,255,255,.75) 0 1px,transparent 1px 2px) 1px 1px/1px 100% no-repeat,repeating-linear-gradient(rgba(255,255,255,.75) 0 1px,transparent 1px 2px) 4px 1px/1px 100% no-repeat"></div>
<svg style="left:21px;top:605px" width="9" height="5" viewBox="0 0 9 5"><path d="M0 0H9L4.5 5z" fill="#000"/></svg>
<span class="t" style="left:34px;top:600px;font-size:13px;line-height:13px;color:#000;transform:scaleX(0.766);">プロパティ</span>
<svg style="left:769px;top:602px" width="13" height="10" viewBox="0 0 13 10"><path d="M0 0.5h2v2h-2zM0 3.5h2v2h-2zM0 6.5h2v2h-2z" fill="#1E1E1E"/><path d="M3.4 1.7H9.4M3.4 4.7H9.4M3.4 7.7H6.4" stroke="#1E1E1E" stroke-width="1.3" fill="none"/><path d="M7.4 7H12.6L10 9.8z" fill="#1E1E1E"/></svg>
<span class="t" style="left:30px;top:625px;font-size:13px;line-height:13px;color:#000;transform:scaleX(0.805);">フォーマット</span>
<div class="sel" style="left:88px;top:622px;width:103px;height:20px;"></div>
<div class="ddb" style="left:174px;top:624px;width:15px;height:16px;"></div>
<svg style="left:177px;top:629px" width="9" height="6" viewBox="0 0 9 6"><path d="M1 1L4.5 4.5L8 1" fill="none" stroke="#4D6185" stroke-width="2"/></svg>
<span class="t" style="left:92px;top:625px;font-size:13px;line-height:13px;color:#000;transform:scaleX(0.840);">なし</span>
<span class="t" style="left:196px;top:625px;font-size:13px;line-height:13px;color:#000;transform:scaleX(0.798);">スタイル</span>
<div class="sel" style="left:240px;top:622px;width:138px;height:20px;"></div>
<div class="ddb" style="left:361px;top:624px;width:15px;height:16px;"></div>
<svg style="left:364px;top:629px" width="9" height="6" viewBox="0 0 9 6"><path d="M1 1L4.5 4.5L8 1" fill="none" stroke="#4D6185" stroke-width="2"/></svg>
<span class="t" style="left:245px;top:625px;font-size:13px;line-height:13px;color:#000;transform:scaleX(0.840);">なし</span>
<div class="btn" style="left:383px;top:624px;width:66px;height:16px;"></div>
<span class="t" style="left:404px;top:625px;font-size:13px;line-height:13px;color:#000;transform:scaleX(0.860);">CSS</span>
<span class="t" style="left:457px;top:624px;font-size:14px;line-height:14px;color:#000;font-weight:bold;font-family:'Liberation Serif',serif;-webkit-text-stroke:0.4px #000;">B</span>
<span class="t" style="left:479px;top:624px;font-size:14px;line-height:14px;color:#000;font-weight:bold;font-family:'Liberation Serif',serif;font-style:italic;-webkit-text-stroke:0.5px #000;">I</span>
<svg style="left:498px;top:626px" width="11" height="12" viewBox="0 0 11 12"><path d="M0 0.5H11M0 2.5H8M0 4.5H11M0 6.5H8M0 8.5H11M0 10.5H8" stroke="#000" stroke-width="1" fill="none"/></svg>
<svg style="left:519px;top:626px" width="11" height="12" viewBox="0 0 11 12"><path d="M0.0 0.5H11.0M2.0 2.5H9.0M0.0 4.5H11.0M2.0 6.5H9.0M0.0 8.5H11.0M2.0 10.5H9.0" stroke="#000" stroke-width="1" fill="none"/></svg>
<svg style="left:540px;top:626px" width="11" height="12" viewBox="0 0 11 12"><path d="M0 0.5H11M3 2.5H11M0 4.5H11M3 6.5H11M0 8.5H11M3 10.5H11" stroke="#000" stroke-width="1" fill="none"/></svg>
<svg style="left:561px;top:626px" width="11" height="12" viewBox="0 0 11 12"><path d="M0 0.5H11M0 2.5H11M0 4.5H11M0 6.5H11M0 8.5H11M0 10.5H11" stroke="#000" stroke-width="1" fill="none"/></svg>
<span class="t" style="left:600px;top:625px;font-size:13px;line-height:13px;color:#000;transform:scaleX(0.798);">リンク</span>
<div class="sel" style="left:630px;top:622px;width:87px;height:20px;"></div>
<div class="ddb" style="left:700px;top:624px;width:15px;height:16px;"></div>
<svg style="left:703px;top:629px" width="9" height="6" viewBox="0 0 9 6"><path d="M1 1L4.5 4.5L8 1" fill="none" stroke="#4D6185" stroke-width="2"/></svg>
<svg style="left:720px;top:625px" width="13" height="13" viewBox="0 0 13 13"><circle cx="6.5" cy="6.5" r="4.6" fill="#F6F4EA" stroke="#222" stroke-width="1"/><path d="M6.5 0V4M6.5 9V13M0 6.5H4M9 6.5H13" stroke="#222" stroke-width="1"/></svg>
<svg style="left:735px;top:625px" width="16" height="13" viewBox="0 0 16 13"><path d="M0.7 2.4Q0.7 0.8 2.2 0.8H5.4Q6.4 0.8 7 2.4H13.4Q15.3 2.4 15.3 4V10.6Q15.3 12.3 13.6 12.3H2.4Q0.7 12.3 0.7 10.6z" fill="#F9DC7A" stroke="#B8861E" stroke-width="1.2"/><path d="M1.6 4.6H14.4V10.4Q14.4 11.4 13.4 11.4H2.6Q1.6 11.4 1.6 10.4z" fill="#FBE79E"/><path d="M1.6 4.5H14.4" stroke="#FDF3C8" stroke-width="1"/></svg>
<svg style="left:767px;top:620px" width="14" height="14" viewBox="0 0 14 14"><circle cx="7" cy="7" r="6" fill="#fff" stroke="#222" stroke-width="1.3"/><text x="7" y="10.6" font-size="10" font-weight="bold" text-anchor="middle" font-family="Liberation Sans,sans-serif" fill="#111">?</text></svg>
<svg style="left:767px;top:635px" width="14" height="14" viewBox="0 0 14 14"><path d="M0.8 7.8H10.4V13.2H0.8z" fill="#fff" stroke="#222" stroke-width="1.3"/><path d="M2.8 11.4L4 8L10.8 1.2L13 3.4L6.2 10.2z" fill="#F2C53A" stroke="#222" stroke-width="1"/><path d="M2.8 11.4L4 8L6.2 10.2z" fill="#222"/><path d="M10.8 1.2L13 3.4" stroke="#E07A3A" stroke-width="1.6"/></svg>
<span class="t" style="left:47px;top:647px;font-size:13px;line-height:13px;color:#000;transform:scaleX(0.821);">フォント</span>
<div class="sel" style="left:88px;top:644px;width:103px;height:20px;"></div>
<div class="ddb" style="left:174px;top:646px;width:15px;height:16px;"></div>
<svg style="left:177px;top:651px" width="9" height="6" viewBox="0 0 9 6"><path d="M1 1L4.5 4.5L8 1" fill="none" stroke="#4D6185" stroke-width="2"/></svg>
<span class="t" style="left:91px;top:647px;font-size:13px;line-height:13px;color:#000;transform:scaleX(0.845);">フォント指定なし</span>
<span class="t" style="left:204px;top:647px;font-size:13px;line-height:13px;color:#000;transform:scaleX(0.810);">サイズ</span>
<div class="sel" style="left:240px;top:644px;width:65px;height:20px;"></div>
<div class="ddb" style="left:288px;top:646px;width:15px;height:16px;"></div>
<svg style="left:291px;top:651px" width="9" height="6" viewBox="0 0 9 6"><path d="M1 1L4.5 4.5L8 1" fill="none" stroke="#4D6185" stroke-width="2"/></svg>
<div style="left:243px;top:647px;width:20px;height:13px;background:#316AC5"></div>
<span class="t" style="left:243px;top:647px;font-size:13px;line-height:13px;color:#fff;transform:scaleX(0.840);">なし</span>
<div class="sel" style="background:#ECE9D8;border-color:#C9C7BA;left:306px;top:644px;width:72px;height:20px;"></div>
<div style="left:361px;top:646px;width:15px;height:16px;border:1px solid #D8D6C8;border-radius:2px;background:#E8E6D8"></div>
<svg style="left:364px;top:651px" width="9" height="6" viewBox="0 0 9 6"><path d="M1 1L4.5 4.5L8 1" fill="none" stroke="#B5B3A6" stroke-width="2"/></svg>
<div style="left:383px;top:646px;width:19px;height:18px;background:#fff;border-right:1px solid #716F64;border-bottom:1px solid #716F64"></div>
<div style="left:385px;top:648px;width:16px;height:15px;background:#ECE9D8;border-left:1px solid #716F64;border-top:1px solid #716F64"></div>
<div style="left:394px;top:657px;width:7px;height:6px;background:#fff"></div>
<svg style="left:395px;top:659px" width="5" height="3" viewBox="0 0 5 3"><path d="M0 0H5L2.5 3z" fill="#000"/></svg>
<div style="left:405px;top:645px;width:68px;height:21px;background:#fff;border:1px solid #7F9DB9"></div>
<svg style="left:498px;top:649px" width="12" height="12" viewBox="0 0 12 12"><rect x="0" y="0" width="3" height="3" fill="#14149A"/><rect x="0" y="5" width="3" height="3" fill="#14149A"/><rect x="0" y="9" width="3" height="3" fill="#14149A"/><path d="M5 1.5H12M5 6.5H12M5 10.5H12" stroke="#000" stroke-width="1"/></svg>
<svg style="left:519px;top:649px" width="12" height="12" viewBox="0 0 12 12"><path d="M0.5 1L1.5 0.3V3.4M0.3 4.7H2.3V6H0.5V7.3H2.5M0.3 8.7H2.3V11.6H0.3M0.9 10.1H2.3" stroke="#14149A" fill="none" stroke-width="1"/><path d="M5 1.5H12M5 6.5H12M5 10.5H12" stroke="#000" stroke-width="1"/></svg>
<svg style="left:540px;top:649px" width="12" height="12" viewBox="0 0 12 12"><path d="M0.5 3.5H6M3 1L0.5 3.5L3 6" stroke="#14149A" stroke-width="1.3" fill="none"/><path d="M7 2H12M7 4.5H12" stroke="#000" stroke-width="1.6"/><path d="M0 8H12M0 10.7H12" stroke="#000" stroke-width="1.2"/></svg>
<svg style="left:561px;top:649px" width="12" height="12" viewBox="0 0 12 12"><path d="M0 3.5H5.5M3 1L5.5 3.5L3 6" stroke="#14149A" stroke-width="1.3" fill="none"/><path d="M7 2H12M7 4.5H12" stroke="#000" stroke-width="1.6"/><path d="M0 8H12M0 10.7H12" stroke="#000" stroke-width="1.2"/></svg>
<span class="t" style="left:584px;top:646px;font-size:13px;line-height:13px;color:#000;transform:scaleX(0.809);">ターゲット</span>
<div class="sel" style="background:#ECE9D8;border-color:#C9C7BA;left:630px;top:644px;width:67px;height:20px;"></div>
<div style="left:680px;top:646px;width:15px;height:16px;border:1px solid #D8D6C8;border-radius:2px;background:#E8E6D8"></div>
<svg style="left:683px;top:651px" width="9" height="6" viewBox="0 0 9 6"><path d="M1 1L4.5 4.5L8 1" fill="none" stroke="#B5B3A6" stroke-width="2"/></svg>
<div style="left:7px;top:666px;width:778px;height:1px;background:#ACA899"></div>
<div style="left:7px;top:667px;width:778px;height:1px;background:#fff"></div>
<div class="btn" style="left:465px;top:680px;width:121px;height:16px;box-shadow:inset 0 0 0 1px #F5B13A, inset 0 0 0 2px #FAD488"></div>
<span class="t" style="left:484px;top:681px;font-size:13px;line-height:13px;color:#000;transform:scaleX(0.793);">ページプロパティ...</span>
<div style="left:591px;top:680px;width:98px;height:16px;border:1px solid #C9C7BA;border-radius:3px;background:#F1EFE5"></div>
<span class="t" style="left:601px;top:681px;font-size:13px;line-height:13px;color:#ACA899;transform:scaleX(0.798);">リストプロパティ...</span>
<svg style="left:771px;top:707px" width="10" height="6" viewBox="0 0 10 6"><path d="M0.8 5L5 0.9L9.2 5z" fill="#fff" stroke="#000" stroke-width="1"/></svg>
<div style="left:7px;top:716px;width:778px;height:20px;background:#ECE9D8"></div>
<div class="hd" style="left:7px;top:717px;width:778px;height:19px;"></div>
<div style="left:11px;top:721px;width:5px;height:10px;background:repeating-linear-gradient(#56657F 0 1px,transparent 1px 2px) 0 0/1px 100% no-repeat,repeating-linear-gradient(#56657F 0 1px,transparent 1px 2px) 3px 0/1px 100% no-repeat,repeating-linear-gradient(rgba(255,255,255,.75) 0 1px,transparent 1px 2px) 1px 1px/1px 100% no-repeat,repeating-linear-gradient(rgba(255,255,255,.75) 0 1px,transparent 1px 2px) 4px 1px/1px 100% no-repeat"></div>
<svg style="left:23px;top:721px" width="6" height="9" viewBox="0 0 6 9"><path d="M0 0L5.5 4.5L0 9z" fill="#000"/></svg>
<span class="t" style="left:34px;top:719px;font-size:13px;line-height:13px;color:#000;transform:scaleX(0.923);">結果</span>
<div style="left:785px;top:100px;width:7px;height:634px;background:linear-gradient(90deg,rgba(20,35,60,0.30) 0,rgba(20,35,60,0.05) 30%,rgba(20,35,60,0) 55%,rgba(20,35,60,0.14) 85%,rgba(20,35,60,0.26) 100%)"></div>
<div style="left:785px;top:366px;width:7px;height:48px;background:linear-gradient(90deg,#B4C0D2,#A3B1C6);border-top:1px solid #8C9BB1;border-bottom:1px solid #8C9BB1"></div>
<svg style="left:786px;top:385px" width="5" height="9" viewBox="0 0 5 9"><path d="M0.5 0L4.5 4.5L0.5 9z" fill="#fff"/></svg>
<div style="left:792px;top:46px;width:232px;height:688px;background:#ECE9D8"></div>
<div class="hd" style="left:792px;top:47px;width:232px;height:19px;"></div>
<div style="left:796px;top:51px;width:5px;height:10px;background:repeating-linear-gradient(#56657F 0 1px,transparent 1px 2px) 0 0/1px 100% no-repeat,repeating-linear-gradient(#56657F 0 1px,transparent 1px 2px) 3px 0/1px 100% no-repeat,repeating-linear-gradient(rgba(255,255,255,.75) 0 1px,transparent 1px 2px) 1px 1px/1px 100% no-repeat,repeating-linear-gradient(rgba(255,255,255,.75) 0 1px,transparent 1px 2px) 4px 1px/1px 100% no-repeat"></div>
<svg style="left:808px;top:51px" width="6" height="9" viewBox="0 0 6 9"><path d="M0 0L5.5 4.5L0 9z" fill="#000"/></svg>
<span class="t" style="left:819px;top:49px;font-size:13px;line-height:13px;color:#000;transform:scaleX(0.823);">CSS</span>
<div class="hd" style="left:792px;top:67px;width:232px;height:19px;"></div>
<div style="left:796px;top:71px;width:5px;height:10px;background:repeating-linear-gradient(#56657F 0 1px,transparent 1px 2px) 0 0/1px 100% no-repeat,repeating-linear-gradient(#56657F 0 1px,transparent 1px 2px) 3px 0/1px 100% no-repeat,repeating-linear-gradient(rgba(255,255,255,.75) 0 1px,transparent 1px 2px) 1px 1px/1px 100% no-repeat,repeating-linear-gradient(rgba(255,255,255,.75) 0 1px,transparent 1px 2px) 4px 1px/1px 100% no-repeat"></div>
<svg style="left:808px;top:71px" width="6" height="9" viewBox="0 0 6 9"><path d="M0 0L5.5 4.5L0 9z" fill="#000"/></svg>
<span class="t" style="left:819px;top:69px;font-size:13px;line-height:13px;color:#000;transform:scaleX(0.806);">アプリケーション</span>
<div class="hd" style="left:792px;top:87px;width:232px;height:19px;"></div>
<div style="left:796px;top:91px;width:5px;height:10px;background:repeating-linear-gradient(#56657F 0 1px,transparent 1px 2px) 0 0/1px 100% no-repeat,repeating-linear-gradient(#56657F 0 1px,transparent 1px 2px) 3px 0/1px 100% no-repeat,repeating-linear-gradient(rgba(255,255,255,.75) 0 1px,transparent 1px 2px) 1px 1px/1px 100% no-repeat,repeating-linear-gradient(rgba(255,255,255,.75) 0 1px,transparent 1px 2px) 4px 1px/1px 100% no-repeat"></div>
<svg style="left:808px;top:91px" width="6" height="9" viewBox="0 0 6 9"><path d="M0 0L5.5 4.5L0 9z" fill="#000"/></svg>
<span class="t" style="left:819px;top:89px;font-size:13px;line-height:13px;color:#000;transform:scaleX(0.801);">タグインスペクタ</span>
<div class="hd" style="left:792px;top:107px;width:232px;height:19px;"></div>
<div style="left:796px;top:111px;width:5px;height:10px;background:repeating-linear-gradient(#56657F 0 1px,transparent 1px 2px) 0 0/1px 100% no-repeat,repeating-linear-gradient(#56657F 0 1px,transparent 1px 2px) 3px 0/1px 100% no-repeat,repeating-linear-gradient(rgba(255,255,255,.75) 0 1px,transparent 1px 2px) 1px 1px/1px 100% no-repeat,repeating-linear-gradient(rgba(255,255,255,.75) 0 1px,transparent 1px 2px) 4px 1px/1px 100% no-repeat"></div>
<svg style="left:807px;top:114px" width="9" height="5" viewBox="0 0 9 5"><path d="M0 0H9L4.5 5z" fill="#000"/></svg>
<span class="t" style="left:819px;top:109px;font-size:13px;line-height:13px;color:#000;transform:scaleX(0.800);">ファイル</span>
<svg style="left:1008px;top:111px" width="13" height="10" viewBox="0 0 13 10"><path d="M0 0.5h2v2h-2zM0 3.5h2v2h-2zM0 6.5h2v2h-2z" fill="#1E1E1E"/><path d="M3.4 1.7H9.4M3.4 4.7H9.4M3.4 7.7H6.4" stroke="#1E1E1E" stroke-width="1.3" fill="none"/><path d="M7.4 7H12.6L10 9.8z" fill="#1E1E1E"/></svg>
<div style="left:792px;top:126px;width:232px;height:19px;background:#9AABC3"></div>
<svg style="left:792px;top:126px" width="56" height="19" viewBox="0 0 56 19"><path d="M1 19V5Q1 2.5 4 2.5H39.5Q42 2.5 43 4.5L51 19z" fill="#ECE9D8"/><path d="M1.5 19V5Q1.5 2.5 4 2.5H39.5Q41.7 2.5 42.7 4.5L50.8 19" fill="none" stroke="#fff" stroke-width="1.1"/></svg>
<span class="t" style="left:798px;top:130px;font-size:13px;line-height:13px;color:#000;transform:scaleX(0.800);">ファイル</span>
<span class="t" style="left:850px;top:130px;font-size:13px;line-height:13px;color:#fff;transform:scaleX(0.812);">アセット</span>
<div style="left:892px;top:129px;width:1px;height:13px;background:#C3CCDB"></div>
<span class="t" style="left:900px;top:130px;font-size:13px;line-height:13px;color:#fff;transform:scaleX(0.769);">スニペット</span>
<div class="sel" style="left:797px;top:150px;width:131px;height:22px;"></div>
<div class="ddb" style="left:911px;top:152px;width:15px;height:18px;"></div>
<svg style="left:914px;top:158px" width="9" height="6" viewBox="0 0 9 6"><path d="M1 1L4.5 4.5L8 1" fill="none" stroke="#4D6185" stroke-width="2"/></svg>
<span class="t" style="left:820px;top:154px;font-size:13px;line-height:13px;color:#000;transform:scaleX(0.904);">学校通信</span>
<svg style="left:800px;top:154px" width="16" height="13" viewBox="0 0 16 13"><defs><linearGradient id="gsf15" x1="0" y1="0" x2="0" y2="1"><stop offset="0" stop-color="#DDF49A"/><stop offset="1" stop-color="#93CC34"/></linearGradient></defs><path d="M1.2 3Q1.2 1 3.2 1H6Q7.2 1 7.8 2.4H12.6Q14.6 2.4 14.6 4.2V10.4Q14.6 12.2 12.8 12.2H3Q1.2 12.2 1.2 10.4z" fill="#86B82A" stroke="#4A7410" stroke-width="1.3"/><path d="M2 5.2Q2 4.2 3 4.2H12.4Q13.6 4.2 13.6 5.4V10.2Q13.6 11.4 12.4 11.4H3.2Q2 11.4 2 10.2z" fill="url(#gsf15)" stroke="#55820F" stroke-width="0.8"/><path d="M3.5 12.7H13.2Q15.3 12.5 15.3 10.5V5" fill="none" stroke="#24380A" stroke-width="0.9"/></svg>
<div class="sel" style="left:933px;top:150px;width:86px;height:22px;"></div>
<div class="ddb" style="left:1002px;top:152px;width:15px;height:18px;"></div>
<svg style="left:1005px;top:158px" width="9" height="6" viewBox="0 0 9 6"><path d="M1 1L4.5 4.5L8 1" fill="none" stroke="#4D6185" stroke-width="2"/></svg>
<span class="t" style="left:937px;top:154px;font-size:13px;line-height:13px;color:#000;transform:scaleX(0.781);">ローカルビュー</span>
<svg style="left:801px;top:174px" width="17" height="17" viewBox="0 0 17 17"><circle cx="3.4" cy="13.2" r="2.7" fill="#C4C4C4" stroke="#7E7E7E" stroke-width="1.2"/><circle cx="2.8" cy="12.6" r="0.9" fill="#EFEFEF"/><g transform="rotate(45 8.5 8.5)"><path d="M-1.5 8.5H1" stroke="#2A70E0" stroke-width="1.2"/><path d="M1 6H4.4L7.2 8.5L4.4 11H1z" fill="#A8DCF8" stroke="#2A70E0" stroke-width="1"/><path d="M7.2 7.4H9.4M7.2 9.6H9.4" stroke="#2A70E0" stroke-width="1"/><path d="M9.4 5.6H11L15.6 8.5L11 11.4H9.4z" fill="#A8DCF8" stroke="#2A70E0" stroke-width="1"/><path d="M15.6 8.5H18.5" stroke="#2A70E0" stroke-width="1.2"/></g></svg>
<svg style="left:831px;top:176px" width="15" height="15" viewBox="0 0 15 15"><path d="M12.3 9.8A5.2 5.2 0 1 1 9.6 3.6" fill="none" stroke="#4C54B4" stroke-width="2.5"/><path d="M7.4 1H13.8V7.4z" fill="#3A409E"/><path d="M10.2 1.6H13.2V4.6" fill="none" stroke="#8C92DC" stroke-width="0.8"/></svg>
<div style="left:856px;top:173px;width:1px;height:22px;background:#8E8C7E"></div>
<div style="left:857px;top:173px;width:1px;height:22px;background:#fff"></div>
<svg style="left:868px;top:176px" width="13" height="15" viewBox="0 0 13 15"><defs><linearGradient id="gget16" x1="0" y1="0" x2="1" y2="0"><stop offset="0" stop-color="#5DBE4E"/><stop offset="0.5" stop-color="#C4F0B4"/><stop offset="1" stop-color="#5DBE4E"/></linearGradient></defs><path d="M3.8 0.8H8.8V6.6H11.8L6.3 13.8L0.8 6.6H3.8z" fill="url(#gget16)" stroke="#2B8230" stroke-width="1.1"/></svg>
<svg style="left:893px;top:176px" width="13" height="15" viewBox="0 0 13 15"><defs><linearGradient id="gput17" x1="0" y1="0" x2="1" y2="0"><stop offset="0" stop-color="#5C9CE8"/><stop offset="0.5" stop-color="#C6E0FA"/><stop offset="1" stop-color="#5C9CE8"/></linearGradient></defs><path d="M3.8 13.8H8.8V7.8H11.8L6.3 0.8L0.8 7.8H3.8z" fill="url(#gput17)" stroke="#2858B0" stroke-width="1.1"/></svg>
<svg style="left:917px;top:176px" width="18" height="15" viewBox="0 0 18 15"><path d="M3.8 0.8H8.6V7.4H11.6L6.2 14.2L0.8 7.4H3.8z" fill="#fff" stroke="#5A5A5A" stroke-width="1.1"/><path d="M10.8 3.6L12.6 6L16.4 0.8" fill="none" stroke="#4A4A4A" stroke-width="1.4"/></svg>
<svg style="left:944px;top:175px" width="15" height="15" viewBox="0 0 15 15"><path d="M3.4 13.8H8.2V7.4H11.2L5.8 0.8L0.4 7.4H3.4z" fill="#EDEDED" stroke="#8E8E8E" stroke-width="1.1"/><rect x="6.6" y="9.6" width="7" height="4.8" fill="#CFCFCF" stroke="#5A5A5A" stroke-width="1.1"/><path d="M8.2 9.6V8.2Q8.2 6.6 10.1 6.6Q12 6.6 12 8.2V9.6" fill="none" stroke="#5A5A5A" stroke-width="1.1"/></svg>
<svg style="left:970px;top:175px" width="16" height="15" viewBox="0 0 16 15"><g fill="none" stroke="#7E7E7E" stroke-width="3.6"><path d="M2.4 6.6Q3.6 2.6 8 2.6Q10.6 2.6 12 4.4"/><path d="M13.6 8.4Q12.4 12.4 8 12.4Q5.4 12.4 4 10.6"/></g><g fill="none" stroke="#D8D8D8" stroke-width="1.8"><path d="M2.4 6.6Q3.6 2.6 8 2.6Q10.6 2.6 12 4.4"/><path d="M13.6 8.4Q12.4 12.4 8 12.4Q5.4 12.4 4 10.6"/></g><path d="M10 6.6H14.6V1.6zM6 8.4H1.4V13.4z" fill="#BEBEBE" stroke="#7E7E7E" stroke-width="0.8"/></svg>
<div style="left:994px;top:173px;width:1px;height:22px;background:#8E8C7E"></div>
<div style="left:995px;top:173px;width:1px;height:22px;background:#fff"></div>
<svg style="left:1005px;top:175px" width="16" height="16" viewBox="0 0 16 16"><rect x="0.8" y="0.8" width="14.4" height="14.4" fill="#fff" stroke="#3A3F9A" stroke-width="1.6"/><rect x="1.6" y="1.6" width="12.8" height="2.2" fill="#3A4FC8"/><rect x="1.6" y="4.5" width="5.5" height="2" fill="#6FE0F0"/><path d="M7.5 4V15M1 7.5H7.5" stroke="#3A3F9A" stroke-width="1.2"/><path d="M8.5 8L13.5 3M10.5 2.5H14V6" fill="none" stroke="#0A5A4A" stroke-width="1.5"/></svg>
<div style="left:792px;top:198px;width:1px;height:536px;background:#B4AF9A"></div>
<div style="left:793px;top:198px;width:230px;height:515px;background:#fff;border-left:1px solid #000;border-top:1px solid #000;border-right:1px solid #CFCCBC;border-bottom:1px solid #C4C0AE"></div>
<div style="left:794px;top:199px;width:228px;height:14px;background:#ECE9D8;border-bottom:1px solid #000"></div>
<span class="t" style="left:797px;top:200px;font-size:13px;line-height:13px;color:#000;font-weight:bold;transform:scaleX(0.873);">ローカルファイル</span>
<div style="left:957px;top:199px;width:1px;height:14px;background:#000"></div>
<div style="left:958px;top:199px;width:1px;height:13px;background:#fff"></div>
<span class="t" style="left:963px;top:200px;font-size:13px;line-height:13px;color:#000;font-weight:bold;transform:scaleX(0.897);">サイズ</span>
<div style="left:997px;top:199px;width:1px;height:14px;background:#000"></div>
<div style="left:998px;top:199px;width:1px;height:13px;background:#fff"></div>
<div style="left:1001px;top:200px;width:23px;height:15px;overflow:hidden"><span class="t" style="left:0;top:0;font-size:13px;line-height:13px;color:#000;font-weight:bold;transform:scaleX(0.958);">タイプ</span></div>
<svg style="left:792px;top:198px" width="60" height="70" viewBox="0 0 60 70"><g stroke="#808080" stroke-dasharray="1 1" fill="none" shape-rendering="crispEdges"><path d="M28.5 31V39M28.5 49V62M34 43.5H41M29 61.5H41"/></g><rect x="7.5" y="20.5" width="8" height="8" fill="#fff" stroke="#808080"/><path d="M9.5 24.5H13.5" stroke="#000"/><rect x="24.5" y="39.5" width="8" height="8" fill="#fff" stroke="#808080"/><path d="M26.5 43.5H30.5M28.5 41.5V45.5" stroke="#000"/></svg>
<svg style="left:813px;top:216px" width="16" height="13" viewBox="0 0 16 13"><defs><linearGradient id="gsf18" x1="0" y1="0" x2="0" y2="1"><stop offset="0" stop-color="#DDF49A"/><stop offset="1" stop-color="#93CC34"/></linearGradient></defs><path d="M1.2 3Q1.2 1 3.2 1H6Q7.2 1 7.8 2.4H12.6Q14.6 2.4 14.6 4.2V10.4Q14.6 12.2 12.8 12.2H3Q1.2 12.2 1.2 10.4z" fill="#86B82A" stroke="#4A7410" stroke-width="1.3"/><path d="M2 5.2Q2 4.2 3 4.2H12.4Q13.6 4.2 13.6 5.4V10.2Q13.6 11.4 12.4 11.4H3.2Q2 11.4 2 10.2z" fill="url(#gsf18)" stroke="#55820F" stroke-width="0.8"/><path d="M3.5 12.7H13.2Q15.3 12.5 15.3 10.5V5" fill="none" stroke="#24380A" stroke-width="0.9"/></svg>
<span class="t" style="left:840px;top:216px;font-size:13px;line-height:13px;color:#000;transform:scaleX(0.890);">サイト - 学校通信 (C:...</span>
<div style="left:1000px;top:216px;width:24px;height:15px;overflow:hidden"><span class="t" style="left:0;top:0;font-size:13px;line-height:13px;color:#000;transform:scaleX(0.785);">フォルダ</span></div>
<svg style="left:833px;top:234px" width="16" height="13" viewBox="0 0 16 13"><defs><linearGradient id="gsf19" x1="0" y1="0" x2="0" y2="1"><stop offset="0" stop-color="#DDF49A"/><stop offset="1" stop-color="#93CC34"/></linearGradient></defs><path d="M1.2 3Q1.2 1 3.2 1H6Q7.2 1 7.8 2.4H12.6Q14.6 2.4 14.6 4.2V10.4Q14.6 12.2 12.8 12.2H3Q1.2 12.2 1.2 10.4z" fill="#86B82A" stroke="#4A7410" stroke-width="1.3"/><path d="M2 5.2Q2 4.2 3 4.2H12.4Q13.6 4.2 13.6 5.4V10.2Q13.6 11.4 12.4 11.4H3.2Q2 11.4 2 10.2z" fill="url(#gsf19)" stroke="#55820F" stroke-width="0.8"/><path d="M3.5 12.7H13.2Q15.3 12.5 15.3 10.5V5" fill="none" stroke="#24380A" stroke-width="0.9"/></svg>
<span class="t" style="left:860px;top:235px;font-size:13px;line-height:13px;color:#000;transform:scaleX(0.819);">image</span>
<div style="left:1000px;top:235px;width:24px;height:15px;overflow:hidden"><span class="t" style="left:0;top:0;font-size:13px;line-height:13px;color:#000;transform:scaleX(0.785);">フォルダ</span></div>
<svg style="left:833px;top:250px" width="16" height="17" viewBox="0 0 16 17"><path d="M3.5 2.5H11L15.2 6.8V16.2H3.5z" fill="#F4F4F4" stroke="#A0A0A0" stroke-width="1"/><path d="M11 2.5V6.8H15.2" fill="#DADADA" stroke="#A0A0A0" stroke-width="0.8"/><rect x="0.5" y="3" width="9.5" height="3.2" fill="#7FA81E" stroke="#55760F" stroke-width="0.8"/><path d="M7.2 9L5.2 11.3L7.2 13.6M11.2 9L13.2 11.3L11.2 13.6M9.2 8.5V14" fill="none" stroke="#A8A8A8" stroke-width="1"/></svg>
<span class="t" style="left:860px;top:253px;font-size:13px;line-height:13px;color:#000;transform:scaleX(0.861);">index.html</span>
<span class="t" style="left:974px;top:253px;font-size:13px;line-height:13px;color:#000;transform:scaleX(0.895);">1KB</span>
<div style="left:1000px;top:253px;width:24px;height:15px;overflow:hidden"><span class="t" style="left:0;top:0;font-size:13px;line-height:13px;color:#000;transform:scaleX(0.848);">HTML</span></div>
<div style="left:794px;top:695px;width:228px;height:17px;background:linear-gradient(#F1EFE9,#FEFEFB)"></div>
<div style="left:794px;top:696px;width:16px;height:16px;border:1px solid #fff;border-radius:3px;background:linear-gradient(135deg,#C6D6FB,#B4C7F6 70%,#A4B9F0);box-shadow:inset -1px -1px 0 #9DB4EE"></div>
<svg style="left:798px;top:699px" width="8" height="9" viewBox="0 0 8 9"><path d="M5.5 0.8L2 4.5L5.5 8.2" fill="none" stroke="#3E4E7A" stroke-width="2.2"/></svg>
<div style="left:1005px;top:696px;width:16px;height:16px;border:1px solid #fff;border-radius:3px;background:linear-gradient(135deg,#C6D6FB,#B4C7F6 70%,#A4B9F0);box-shadow:inset -1px -1px 0 #9DB4EE"></div>
<svg style="left:1009px;top:699px" width="8" height="9" viewBox="0 0 8 9"><path d="M2.5 0.8L6 4.5L2.5 8.2" fill="none" stroke="#3E4E7A" stroke-width="2.2"/></svg>
<div style="left:811px;top:696px;width:46px;height:16px;border:1px solid #fff;border-radius:3px;background:linear-gradient(#C9D7FC,#B9CAF7);box-shadow:inset -1px -1px 0 #9DB4EE"></div>
<div style="left:830px;top:701px;width:8px;height:7px;background:repeating-linear-gradient(90deg,#EEF4FE 0 1px,#8CB0F8 1px 2px)"></div>
<svg style="left:795px;top:716px" width="17" height="16" viewBox="0 0 17 16"><defs><radialGradient id="gs20" cx="0.4" cy="0.3" r="0.8"><stop offset="0" stop-color="#B4E8E0"/><stop offset="0.5" stop-color="#4AA8C8"/><stop offset="1" stop-color="#2A68A8"/></radialGradient></defs><circle cx="7.6" cy="7.6" r="7" fill="url(#gs20)" stroke="#3A78A8" stroke-width="0.8"/><path d="M2.6 5Q4.6 1.8 8 2.2L9.4 4.6L6.6 5.6L7 8.4L4.6 9.4L3 7.6zM10.4 3.4L13 5.4L12.4 7.6L10.4 6.4z" fill="#5FCB6A"/><path d="M7.5 7.5H12.2L15.5 10V15.5H7.5z" fill="#F8F8F8" stroke="#7A8088" stroke-width="0.9"/><path d="M9 10.8H14M9 12.6H14M9 14.2H14" stroke="#8A9098" stroke-width="0.7"/></svg>
<span class="t" style="left:825px;top:719px;font-size:13px;line-height:13px;color:#000;transform:scaleX(0.839);">1個のローカルアイテム(合計321/</span>
<div class="btn" style="left:983px;top:719px;width:36px;height:14px;"></div>
<span class="t" style="left:988px;top:720px;font-size:13px;line-height:13px;color:#000;transform:scaleX(0.736);">ログ...</span>
</div></body></html>
